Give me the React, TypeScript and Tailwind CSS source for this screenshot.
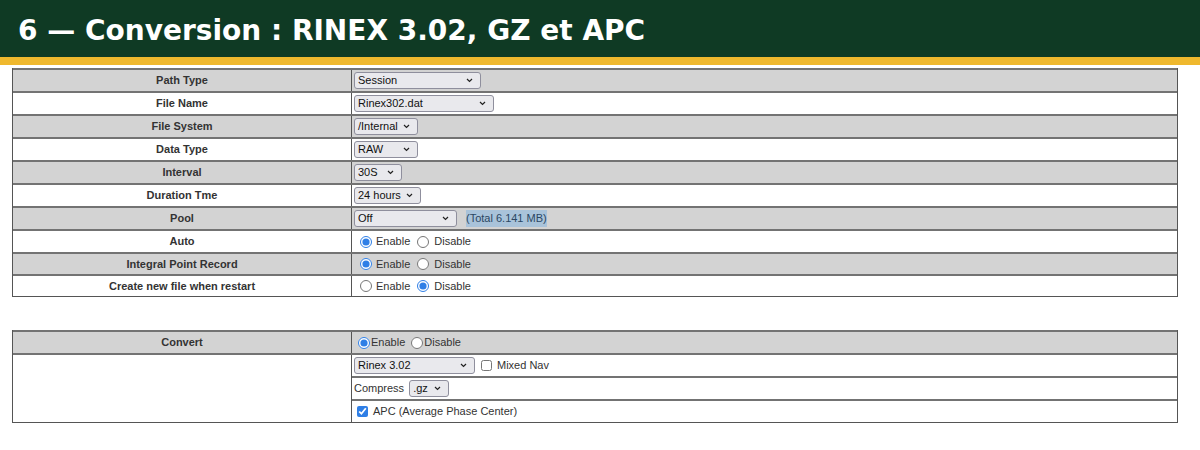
import React from "react";

const font = "font-['Liberation_Sans',Arial,sans-serif]";

function Select({ value, w }: { value: string; w: string }) {
  return (
    <div
      className={`flex h-[17px] items-center justify-between rounded-[3px] border border-[#8f8f9d] bg-[#e9e9ed] pl-[3px] pr-[7px] text-[11px] text-[#111] ${w}`}
    >
      <span>{value}</span>
      <svg width="7" height="5" viewBox="0 0 7 5">
        <path d="M1 1l2.5 2.5L6 1" stroke="#222" strokeWidth="1.2" fill="none" />
      </svg>
    </div>
  );
}

function Radios({ name, on }: { name: string; on: "enable" | "disable" }) {
  return (
    <div className="flex items-center text-[11px] text-[#333]">
      <input
        type="radio"
        name={name}
        defaultChecked={on === "enable"}
        className="m-0 ml-[6px] mr-[4px] h-[12px] w-[12px] accent-[#2f7fe6]"
      />
      <span>Enable</span>
      <input
        type="radio"
        name={name}
        defaultChecked={on === "disable"}
        className="m-0 ml-[7px] mr-[5px] h-[12px] w-[12px] accent-[#2f7fe6]"
      />
      <span>Disable</span>
    </div>
  );
}

function Row({
  label,
  gray,
  h,
  children,
}: {
  label: string;
  gray?: boolean;
  h: string;
  children: React.ReactNode;
}) {
  return (
    <div className={`flex border-t-2 border-[#737373] ${h} ${gray ? "bg-[#d3d3d3]" : "bg-white"}`}>
      <div className="flex w-[339px] items-center justify-center border-r border-[#555] text-[11px] font-bold text-[#333]">
        {label}
      </div>
      <div className="flex flex-1 items-center pl-[2px]">{children}</div>
    </div>
  );
}

export default function App() {
  return (
    <div className={`h-[450px] w-[1200px] overflow-hidden bg-white ${font}`}>
      <div className="flex h-[57px] items-center bg-[#0f3a24] px-[18px] pt-[5px]">
        <h1 className="font-['DejaVu_Sans',sans-serif] text-[28px] font-bold text-white">
          6 — Conversion : RINEX 3.02, GZ et APC
        </h1>
      </div>
      <div className="h-[8px] bg-[#efb82e]" />

      <div className="ml-[12px] mt-[3px] w-[1166px] border-x border-b border-[#555]">
        <Row label="Path Type" gray h="h-[23px]">
          <Select value="Session" w="w-[127px]" />
        </Row>
        <Row label="File Name" h="h-[23px]">
          <Select value="Rinex302.dat" w="w-[140px]" />
        </Row>
        <Row label="File System" gray h="h-[23px]">
          <Select value="/Internal" w="w-[64px]" />
        </Row>
        <Row label="Data Type" h="h-[23px]">
          <Select value="RAW" w="w-[64px]" />
        </Row>
        <Row label="Interval" gray h="h-[23px]">
          <Select value="30S" w="w-[48px]" />
        </Row>
        <Row label="Duration Tme" h="h-[23px]">
          <Select value="24 hours" w="w-[67px]" />
        </Row>
        <Row label="Pool" gray h="h-[23px]">
          <Select value="Off" w="w-[103px]" />
          <span className="ml-[9px] bg-[#a9c3da] text-[11px] text-[#2b4763]">(Total 6.141 MB)</span>
        </Row>
        <Row label="Auto" h="h-[23px]">
          <Radios name="auto" on="enable" />
        </Row>
        <Row label="Integral Point Record" gray h="h-[22px]">
          <Radios name="ipr" on="enable" />
        </Row>
        <Row label="Create new file when restart" h="h-[22px]">
          <Radios name="cnf" on="disable" />
        </Row>
      </div>

      <div className="ml-[12px] mt-[33px] w-[1166px] border-x border-b border-[#555]">
        <div className="flex h-[23px] border-t-2 border-[#737373] bg-[#d3d3d3]">
          <div className="flex w-[339px] items-center justify-center border-r border-[#555] text-[11px] font-bold text-[#333]">
            Convert
          </div>
          <div className="flex flex-1 items-center text-[11px] text-[#333]">
            <input type="radio" name="convert" defaultChecked className="m-0 ml-[6px] h-[12px] w-[12px] accent-[#2f7fe6]" />
            <span className="ml-[1px]">Enable</span>
            <input type="radio" name="convert" className="m-0 ml-[6px] h-[12px] w-[12px] accent-[#2f7fe6]" />
            <span className="ml-[1px]">Disable</span>
          </div>
        </div>
        <div className="flex border-t-2 border-[#737373]">
          <div className="w-[339px] border-r border-[#555] bg-white" />
          <div className="flex flex-1 flex-col">
            <div className="flex h-[21px] items-center pl-[2px] text-[11px] text-[#333]">
              <Select value="Rinex 3.02" w="w-[121px]" />
              <input type="checkbox" className="m-0 ml-[6px] mr-[5px] h-[11px] w-[11px] accent-[#2f7fe6]" />
              <span>Mixed Nav</span>
            </div>
            <div className="flex h-[23px] items-center border-t-2 border-[#737373] pl-[2px] text-[11px] text-[#333]">
              <span>Compress</span>
              <div className="ml-[5px]">
                <Select value=".gz" w="w-[40px]" />
              </div>
            </div>
            <div className="flex h-[23px] items-center border-t-2 border-[#737373] text-[11px] text-[#333]">
              <input type="checkbox" defaultChecked className="m-0 ml-[5px] mr-[5px] h-[11px] w-[11px] accent-[#2f7fe6]" />
              <span>APC (Average Phase Center)</span>
            </div>
          </div>
        </div>
      </div>
    </div>
  );
}
